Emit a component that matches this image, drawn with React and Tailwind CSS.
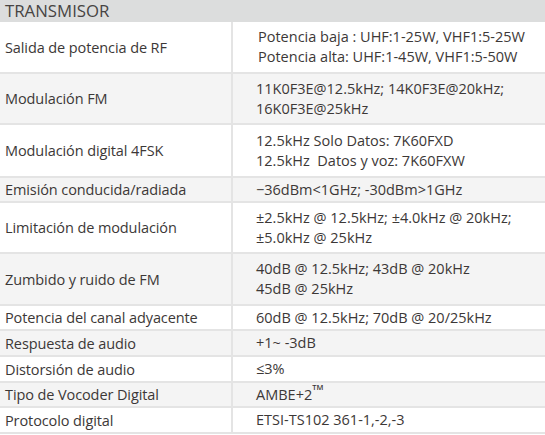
import React from "react";

const rows = [
  { h: "h-[52px]", label: "Salida de potencia de RF", value: ["Potencia baja : UHF:1-25W, VHF1:5-25W", "Potencia alta: UHF:1-45W, VHF1:5-50W"], pl: "pl-[25px]" },
  { h: "h-[51px]", label: "Modulación FM", value: ["11K0F3E@12.5kHz; 14K0F3E@20kHz;", "16K0F3E@25kHz"] },
  { h: "h-[53px]", label: "Modulación digital 4FSK", value: ["12.5kHz Solo Datos: 7K60FXD", "12.5kHz  Datos y voz: 7K60FXW"] },
  { h: "h-[25px]", label: "Emisión conducida/radiada", value: ["\u221236dBm<1GHz; -30dBm>1GHz"] },
  { h: "h-[51px]", label: "Limitación de modulación", value: ["±2.5kHz @ 12.5kHz; ±4.0kHz @ 20kHz;", "±5.0kHz @ 25kHz"] },
  { h: "h-[52px]", label: "Zumbido y ruido de FM", value: ["40dB @ 12.5kHz; 43dB @ 20kHz", "45dB @ 25kHz"] },
  { h: "h-[25px]", label: "Potencia del canal adyacente", value: ["60dB @ 12.5kHz; 70dB @ 20/25kHz"] },
  { h: "h-[26px]", label: "Respuesta de audio", value: ["+1~ -3dB"] },
  { h: "h-[26px]", label: "Distorsión de audio", value: ["≤3%"] },
  { h: "h-[25px]", label: "Tipo de Vocoder Digital", value: ["AMBE"], tm: true },
  { h: "h-[26px]", label: "Protocolo digital", value: ["ETSI-TS102 361-1,-2,-3"] },
];

export default function App() {
  return (
    <div
      className="w-[545px] h-[435px] bg-white text-[#3c3837] overflow-hidden"
      style={{ fontFamily: '"Open Sans", "Noto Sans", sans-serif' }}
    >
      <div className="h-[22px] bg-[#dcdddd] flex items-center pl-[5px] text-[16.8px] leading-none text-[#474443]">
        TRANSMISOR
      </div>
      {rows.map((r, i) => (
        <div
          key={i}
          className={`flex ${r.h} border-b-2 border-[#e4e4e4] ${i % 2 === 1 ? "bg-[#f4f4f4]" : "bg-white"}`}
        >
          <div className="w-[231px] flex items-center pl-[5px] text-[14.5px] tracking-[-0.1px] leading-[19px]">
            {r.label}
          </div>
          <div className={`flex-1 border-l-2 border-[#e4e4e4] flex flex-col justify-center ${r.pl || "pl-[23px]"} text-[14.5px] leading-[20px] whitespace-pre`}>
            {r.tm ? (
              <div>
                AMBE+2<span className="inline-block align-top text-[7.5px] leading-none font-semibold -mt-[1px]">TM</span>
              </div>
            ) : (
              r.value.map((v, j) => <div key={j}>{v}</div>)
            )}
          </div>
        </div>
      ))}
    </div>
  );
}
